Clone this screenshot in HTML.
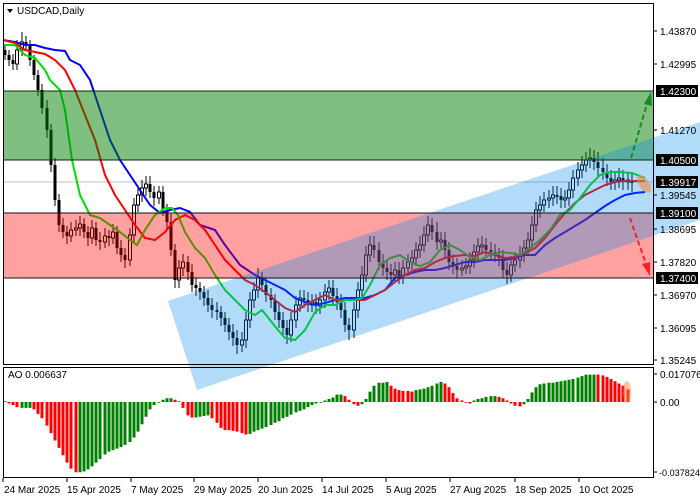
<!DOCTYPE html>
<html><head><meta charset="utf-8"><style>
html,body{margin:0;padding:0;background:#fff;width:700px;height:500px;overflow:hidden}
svg{display:block;font-family:"Liberation Sans",sans-serif}
</style></head><body>
<svg width="700" height="500" xmlns="http://www.w3.org/2000/svg">
<line x1="3" y1="182" x2="654" y2="182" stroke="#c0c0c0"/>
<!-- wicks -->
<path fill="none" stroke="#000" stroke-width="1" d="M5 45V60M9 50V66M13 54V70M17 40V70M22 32V56M26 36V50M30 40V66M34 55V80M38 70V96M42 84V114M47 100V138M51 124V172M55 158V206M59 194V232M63 218V238M67 226V244M71 222V242M76 220V236M80 216V236M84 218V238M88 226V246M92 220V244M96 222V246M100 232V250M105 228V248M109 230V246M113 224V244M117 226V254M121 240V262M125 248V268M130 228V266M134 198V242M138 186V212M142 180V202M146 176V196M150 176V198M154 186V206M159 186V204M163 186V216M167 204V230M171 214V256M175 244V288M179 260V288M183 254V276M188 256V280M192 264V292M196 278V296M200 282V300M204 286V306M208 290V312M212 298V318M217 302V320M221 306V326M225 312V332M229 318V340M233 324V346M237 330V354M242 332V352M246 312V348M250 292V328M254 282V308M258 268V298M262 272V292M266 278V302M271 288V308M275 294V320M279 304V328M283 312V336M287 320V344M291 312V342M296 296V328M300 290V312M304 290V308M308 292V312M312 294V312M316 294V314M320 292V314M325 284V308M329 280V300M333 280V304M337 288V310M341 294V318M345 302V332M349 318V340M354 302V338M358 282V318M362 266V298M366 246V282M370 236V262M374 236V258M379 242V270M383 254V276M387 260V280M391 264V282M395 262V282M399 262V284M403 260V284M408 254V276M412 250V270M416 242V266M420 236V258M424 226V252M428 216V242M432 218V240M437 222V250M441 232V250M445 232V258M449 242V270M453 254V274M457 258V278M462 260V276M466 258V274M470 252V274M474 244V268M478 238V260M482 236V254M486 238V258M491 242V260M495 244V262M499 248V266M503 250V278M507 262V284M511 256V282M515 252V272M520 246V268M524 240V262M528 232V256M532 216V248M536 202V232M540 196V218M544 192V212M549 190V208M553 186V206M557 186V204M561 188V208M565 190V208M569 182V206M573 170V198M578 162V186M582 156V178M586 152V172M590 148V168M594 150V170M598 152V176M603 158V180M607 164V186M611 170V190M615 172V190M619 168V188M623 170V190M628 172V190M632 172V192"/>
<!-- bear bodies -->
<path fill="#000" d="M3.5 50h3V55h-3zM7.5 55h3V60h-3zM11.5 60h3V64h-3zM24.5 42h3V45h-3zM28.5 45h3V60h-3zM32.5 60h3V75h-3zM36.5 75h3V90h-3zM40.5 90h3V108h-3zM45.5 108h3V130h-3zM49.5 130h3V165h-3zM53.5 165h3V200h-3zM57.5 200h3V225h-3zM61.5 225h3V232h-3zM65.5 232h3V236h-3zM82.5 224h3V232h-3zM86.5 232h3V238h-3zM94.5 228h3V240h-3zM98.5 240h3V242h-3zM107.5 236h3V238h-3zM115.5 232h3V248h-3zM119.5 248h3V255h-3zM123.5 255h3V260h-3zM148.5 184h3V192h-3zM152.5 192h3V198h-3zM161.5 192h3V210h-3zM165.5 210h3V222h-3zM169.5 222h3V250h-3zM173.5 250h3V280h-3zM186.5 262h3V272h-3zM190.5 272h3V285h-3zM194.5 285h3V288h-3zM198.5 288h3V292h-3zM202.5 292h3V298h-3zM206.5 298h3V305h-3zM210.5 305h3V310h-3zM215.5 310h3V312h-3zM219.5 312h3V318h-3zM223.5 318h3V325h-3zM227.5 325h3V332h-3zM231.5 332h3V338h-3zM235.5 338h3V345h-3zM260.5 278h3V285h-3zM264.5 285h3V295h-3zM269.5 295h3V300h-3zM273.5 300h3V312h-3zM277.5 312h3V320h-3zM281.5 320h3V328h-3zM285.5 328h3V335h-3zM302.5 298h3V300h-3zM306.5 300h3V305h-3zM314.5 302h3V306h-3zM331.5 288h3V296h-3zM335.5 296h3V302h-3zM339.5 302h3V310h-3zM343.5 310h3V325h-3zM347.5 325h3V330h-3zM372.5 245h3V250h-3zM377.5 250h3V262h-3zM381.5 262h3V268h-3zM385.5 268h3V272h-3zM389.5 272h3V275h-3zM397.5 270h3V276h-3zM430.5 225h3V232h-3zM435.5 232h3V242h-3zM443.5 240h3V250h-3zM447.5 250h3V262h-3zM451.5 262h3V266h-3zM455.5 266h3V270h-3zM484.5 245h3V250h-3zM489.5 250h3V252h-3zM493.5 252h3V255h-3zM497.5 255h3V258h-3zM501.5 258h3V270h-3zM505.5 270h3V275h-3zM555.5 195h3V197h-3zM559.5 196h3V200h-3zM592.5 158h3V162h-3zM596.5 162h3V168h-3zM601.5 168h3V172h-3zM605.5 172h3V178h-3zM609.5 178h3V182h-3zM621.5 178h3V182h-3zM630.5 180h3V183h-3z"/>
<!-- bull bodies -->
<path fill="#fff" stroke="#000" stroke-width="1" d="M15.5 50h3V64h-3zM20.5 42h3V50h-3zM69.5 230h3V236h-3zM74.5 228h3V230h-3zM78.5 224h3V228h-3zM90.5 228h3V238h-3zM103.5 236h3V242h-3zM111.5 232h3V238h-3zM128.5 235h3V260h-3zM132.5 205h3V235h-3zM136.5 195h3V205h-3zM140.5 188h3V195h-3zM144.5 184h3V188h-3zM157.5 192h3V198h-3zM177.5 268h3V280h-3zM181.5 262h3V268h-3zM240.5 340h3V345h-3zM244.5 320h3V340h-3zM248.5 300h3V320h-3zM252.5 290h3V300h-3zM256.5 278h3V290h-3zM289.5 320h3V335h-3zM294.5 305h3V320h-3zM298.5 298h3V305h-3zM310.5 302h3V305h-3zM318.5 300h3V306h-3zM323.5 292h3V300h-3zM327.5 288h3V292h-3zM352.5 310h3V330h-3zM356.5 290h3V310h-3zM360.5 275h3V290h-3zM364.5 255h3V275h-3zM368.5 245h3V255h-3zM393.5 270h3V275h-3zM401.5 268h3V276h-3zM406.5 262h3V268h-3zM410.5 258h3V262h-3zM414.5 250h3V258h-3zM418.5 245h3V250h-3zM422.5 235h3V245h-3zM426.5 225h3V235h-3zM439.5 240h3V242h-3zM460.5 268h3V270h-3zM464.5 266h3V268h-3zM468.5 260h3V266h-3zM472.5 252h3V260h-3zM476.5 246h3V252h-3zM480.5 245h3V247h-3zM509.5 265h3V275h-3zM513.5 260h3V265h-3zM518.5 255h3V260h-3zM522.5 248h3V255h-3zM526.5 240h3V248h-3zM530.5 225h3V240h-3zM534.5 210h3V225h-3zM538.5 205h3V210h-3zM542.5 200h3V205h-3zM547.5 198h3V200h-3zM551.5 195h3V198h-3zM563.5 198h3V200h-3zM567.5 190h3V198h-3zM571.5 178h3V190h-3zM576.5 170h3V178h-3zM580.5 165h3V170h-3zM584.5 160h3V165h-3zM588.5 158h3V160h-3zM613.5 180h3V182h-3zM617.5 178h3V180h-3zM626.5 180h3V182h-3z"/>
<!-- MAs -->
<polyline fill="none" stroke="#0000ff" stroke-width="2" points="3,40 15,42 25,45 35,45 45,48 55,50 65,51 70,60 80,65 90,80 100,110 110,140 120,160 130,175 140,190 150,205 160,213 170,210 180,208 190,212 200,225 215,230 225,245 240,265 255,275 265,280 275,285 285,290 295,298 305,302 315,305 325,303 335,300 345,298 355,298 365,298 375,295 385,290 395,278 405,275 415,272 425,270 435,270 445,268 455,265 465,262 475,262 485,260 495,260 505,260 515,258 525,255 535,255 545,245 555,238 565,232 575,226 585,220 595,213 605,206 615,200 625,195 635,193 645,192"/>
<polyline fill="none" stroke="#ff0000" stroke-width="2" points="3,40 15,43 25,50 35,52 45,54 55,60 65,70 75,90 85,115 95,140 105,175 115,195 125,210 135,225 145,238 155,240 165,232 175,220 185,215 195,220 205,230 215,245 225,260 235,270 245,280 255,285 265,292 275,300 285,308 295,312 305,305 315,300 325,295 335,300 345,300 355,300 365,300 375,295 385,290 395,282 405,275 415,270 425,268 435,262 445,258 455,256 465,255 475,256 485,252 495,255 505,258 515,257 525,253 535,248 545,238 555,225 565,213 575,203 585,195 595,190 605,185 615,182 625,181 645,181"/>
<polyline fill="none" stroke="#00e000" stroke-width="2" points="3,45 15,45 25,55 35,58 45,70 50,80 60,90 65,110 72,160 80,195 90,215 100,218 110,225 120,232 130,240 137,245 145,230 155,215 165,208 172,208 178,215 185,232 195,248 205,258 215,275 225,290 235,300 245,310 255,315 262,310 270,320 278,330 285,338 295,340 305,330 315,312 325,305 335,305 345,300 355,300 362,298 370,285 380,265 390,258 400,255 410,262 420,266 430,262 440,250 450,245 460,250 470,257 480,260 490,255 500,252 510,253 520,255 530,248 540,240 550,230 560,215 570,210 580,198 590,185 600,175 610,172 620,172 632,173 645,178"/>
<!-- overlays -->
<rect x="3" y="91" width="651" height="69" fill="rgba(0,128,0,0.5)"/>
<rect x="3" y="213" width="651" height="65" fill="rgba(255,0,0,0.37)"/>
<polygon points="168,301 700,122 700,220 197,390" fill="rgba(0,136,240,0.3)"/>
<line x1="3" y1="91" x2="654" y2="91" stroke="#0a2a0a"/>
<line x1="3" y1="160" x2="654" y2="160" stroke="#0a2a0a"/>
<line x1="3" y1="213" x2="654" y2="213" stroke="#111"/>
<line x1="3" y1="278" x2="654" y2="278" stroke="#111"/>
<ellipse cx="644" cy="184" rx="5" ry="10" transform="rotate(-35 644 184)" fill="rgba(240,140,60,0.6)"/>
<line x1="631" y1="158" x2="647" y2="104" stroke="#1a8a1a" stroke-width="2" stroke-dasharray="5,3"/>
<polygon points="651,92 644,104 652,106" fill="#1a8a1a"/>
<line x1="630" y1="218" x2="646" y2="264" stroke="#ff2020" stroke-width="2" stroke-dasharray="5,3"/>
<polygon points="650,276 642,264 650,262" fill="#ff2020"/>
<!-- frames -->
<rect x="3.5" y="3.5" width="650" height="361" fill="none" stroke="#000"/>
<rect x="3.5" y="367.5" width="650" height="110" fill="none" stroke="#000"/>
<rect x="655" y="364" width="45" height="4" fill="#fff"/>
<polygon points="7,9 13,9 10,13" fill="#000"/>
<text x="17" y="14" font-size="10" fill="#000">USDCAD,Daily</text>
<!-- price axis -->
<g font-size="10" fill="#000" stroke="none">
<text x="660" y="35">1.43870</text><text x="660" y="68">1.42995</text><text x="660" y="134">1.41270</text><text x="660" y="199">1.39545</text><text x="660" y="233">1.38695</text><text x="660" y="266">1.37820</text><text x="660" y="299">1.36970</text><text x="660" y="332">1.36095</text><text x="660" y="364">1.35245</text>
</g>
<path stroke="#000" d="M654 31h3M654 64h3M654 130h3M654 195h3M654 229h3M654 262h3M654 295h3M654 328h3M654 360h3M654 374h3M654 402h3M654 472h3"/>
<g fill="#000"><rect x="656" y="85" width="42" height="12"/><rect x="656" y="154" width="42" height="12"/><rect x="656" y="176" width="42" height="12"/><rect x="656" y="207" width="42" height="12"/><rect x="656" y="272" width="42" height="12"/></g>
<g font-size="10" fill="#fff"><text x="660" y="95">1.42300</text><text x="660" y="164">1.40500</text><text x="660" y="186">1.39917</text><text x="660" y="217">1.39100</text><text x="660" y="282">1.37400</text></g>
<!-- AO -->
<g transform="matrix(1 0 0 0.74 0 104.52)">
<path fill="none" stroke="#008000" stroke-width="3" d="M5 402V401M22 402V410M26 402V410M30 402V410M80 402V497M84 402V496M88 402V493M92 402V489M96 402V484M100 402V479M105 402V473M109 402V469M113 402V467M117 402V465M121 402V463M125 402V460M130 402V456M134 402V450M138 402V442M142 402V432M146 402V422M150 402V412M154 402V406M159 402V403M163 402V399M167 402V397M171 402V397M196 402V423M200 402V422M204 402V421M208 402V420M250 402V445M254 402V442M258 402V440M262 402V438M266 402V436M271 402V433M275 402V430M279 402V428M283 402V424M287 402V422M291 402V419M296 402V416M300 402V414M304 402V412M308 402V409M312 402V406M316 402V404M321 402V403M325 402V400M329 402V398M333 402V396M337 402V392M341 402V392M362 402V405M366 402V398M370 402V388M374 402V380M379 402V376M383 402V376M387 402V375M416 402V386M420 402V385M424 402V384M428 402V382M432 402V380M437 402V377M441 402V375M474 402V400M478 402V398M482 402V397M486 402V395M491 402V394M495 402V394M524 402V405M528 402V398M532 402V389M536 402V382M540 402V378M544 402V377M549 402V376M553 402V376M557 402V375M561 402V374M565 402V373M569 402V372M573 402V371M578 402V369M582 402V367M586 402V365M590 402V365M594 402V365"/>
<path fill="none" stroke="#ff0000" stroke-width="3" d="M9 402V404M13 402V406M17 402V409M34 402V412M38 402V418M42 402V424M47 402V434M51 402V444M55 402V454M59 402V464M63 402V474M67 402V484M71 402V492M76 402V497M175 402V399M179 402V401M183 402V410M188 402V420M192 402V423M212 402V424M217 402V430M221 402V437M225 402V440M229 402V440M233 402V441M237 402V442M242 402V444M246 402V446M345 402V394M349 402V399M354 402V405M358 402V407M391 402V380M395 402V384M399 402V386M403 402V387M408 402V387M412 402V388M445 402V377M449 402V382M453 402V390M457 402V397M462 402V400M466 402V403M470 402V404M499 402V395M503 402V397M507 402V400M511 402V404M515 402V407M520 402V408M598 402V365M603 402V366M607 402V368M611 402V371M615 402V374M619 402V377M623 402V380M628 402V385"/>
</g>
<ellipse cx="627" cy="392" rx="4" ry="11" fill="rgba(255,130,60,0.5)"/>
<text x="8" y="378" font-size="10" fill="#000">AO 0.006637</text>
<g font-size="10" fill="#000"><text x="660" y="378">0.017076</text><text x="660" y="406">0.00</text><text x="659" y="476" font-size="9.5" textLength="41" lengthAdjust="spacingAndGlyphs">-0.037824</text></g>
<!-- time axis -->
<path stroke="#000" d="M3 478v4M67 478v4M131 478v4M194 478v4M258 478v4M322 478v4M386 478v4M450 478v4M515 478v4M579 478v4"/>
<g font-size="10" fill="#000"><text x="4" y="493">24 Mar 2025</text><text x="67" y="493">15 Apr 2025</text><text x="131" y="493">7 May 2025</text><text x="194" y="493">29 May 2025</text><text x="258" y="493">20 Jun 2025</text><text x="322" y="493">14 Jul 2025</text><text x="386" y="493">5 Aug 2025</text><text x="450" y="493">27 Aug 2025</text><text x="515" y="493">18 Sep 2025</text><text x="579" y="493">10 Oct 2025</text></g>
</svg>
</body></html>
